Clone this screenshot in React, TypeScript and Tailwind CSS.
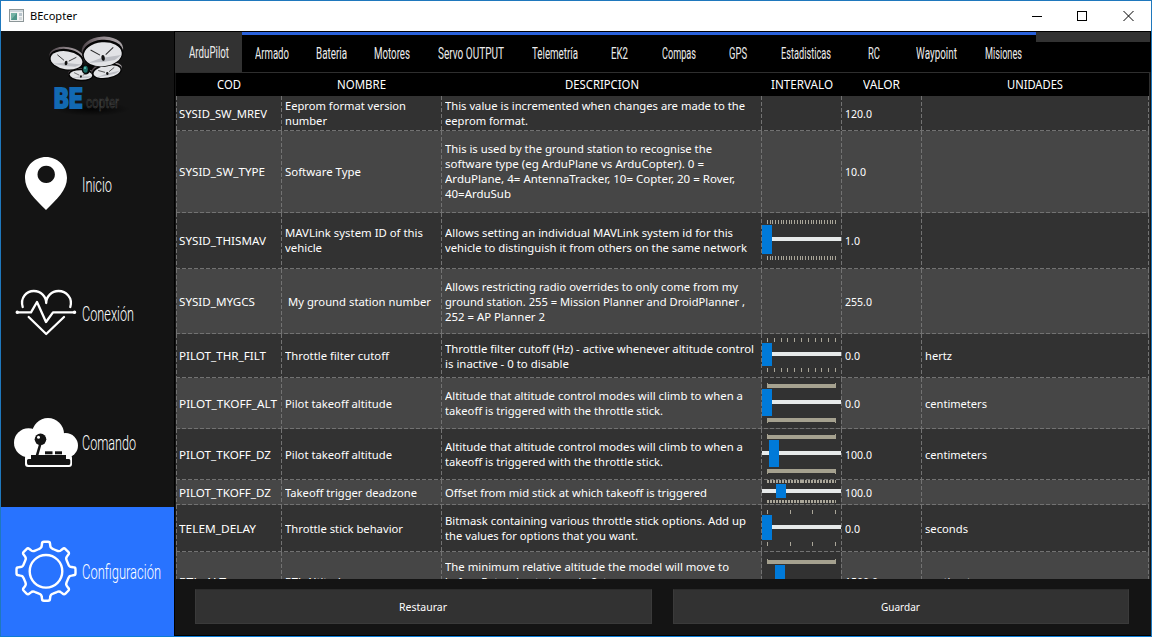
import React, { useLayoutEffect, useRef, useState } from "react";
import type { ReactNode } from "react";

/* Condenses or widens a single line of text to the given width. */
function Line({ t, w, className = "" }: { t: string; w: number; className?: string }) {
  const ref = useRef<HTMLSpanElement>(null);
  const [scale, setScale] = useState(1);
  useLayoutEffect(() => {
    const el = ref.current;
    if (!el) return;
    el.style.transform = "none";
    const natural = el.getBoundingClientRect().width;
    el.style.transform = `scaleX(${w / natural})`;
    setScale(w / natural);
  }, [t, w]);
  return (
    <span className={`block shrink-0 ${className}`} style={{ width: w }}>
      <span ref={ref} className="inline-block origin-left whitespace-pre" style={{ transform: `scaleX(${scale})` }}>
        {t}
      </span>
    </span>
  );
}

type Txt = [string, number];
type SliderSpec = {
  top: number;
  bottom: number;
  tickH: number;
  thumbY: number;
  thumbH: number;
  thumbX: number;
  grooveY: number;
  intervals: number;
  tickW?: number;
};
type Row = {
  h: string;
  cod: Txt;
  name: Txt[];
  desc: Txt[];
  value: Txt;
  unit?: Txt;
  slider?: SliderSpec;
  indent?: boolean;
};

const rows: Row[] = [
  {
    h: "h-[35px]",
    cod: ["SYSID_SW_MREV", 88],
    name: [["Eeprom format version", 121], ["number", 42]],
    desc: [["This value is incremented when changes are made to the", 300], ["eeprom format.", 83]],
    value: ["120.0", 27],
  },
  {
    h: "h-[82px]",
    cod: ["SYSID_SW_TYPE", 86],
    name: [["Software Type", 76]],
    desc: [
      ["This is used by the ground station to recognise the", 267],
      ["software type (eg ArduPlane vs ArduCopter). 0 =", 259],
      ["ArduPlane, 4= AntennaTracker, 10= Copter, 20 = Rover,", 290],
      ["40=ArduSub", 66],
    ],
    value: ["10.0", 21],
  },
  {
    h: "h-[56px]",
    cod: ["SYSID_THISMAV", 87],
    name: [["MAVLink system ID of this", 138], ["vehicle", 37]],
    desc: [
      ["Allows setting an individual MAVLink system id for this", 288],
      ["vehicle to distinguish it from others on the same network", 302],
    ],
    value: ["1.0", 15],
    slider: { top: 7, bottom: 43, tickH: 4, thumbY: 12, thumbH: 29, thumbX: 0, grooveY: 24, intervals: 25 },
  },
  {
    h: "h-[65px]",
    cod: ["SYSID_MYGCS", 76],
    indent: true,
    name: [["My ground station number", 143]],
    desc: [
      ["Allows restricting radio overrides to only come from my", 293],
      ["ground station. 255 = Mission Planner and DroidPlanner ,", 300],
      ["252 = AP Planner 2", 100],
    ],
    value: ["255.0", 27],
  },
  {
    h: "h-[44px]",
    cod: ["PILOT_THR_FILT", 87],
    name: [["Throttle filter cutoff", 104]],
    desc: [["Throttle filter cutoff (Hz) - active whenever altitude control", 309], ["is inactive - 0 to disable", 124]],
    value: ["0.0", 15],
    unit: ["hertz", 27],
    slider: { top: 4, bottom: 34, tickH: 4, thumbY: 9, thumbH: 23, thumbX: 0, grooveY: 18, intervals: 10 },
  },
  {
    h: "h-[51px]",
    cod: ["PILOT_TKOFF_ALT", 98],
    name: [["Pilot takeoff altitude", 107]],
    desc: [["Altitude that altitude control modes will climb to when a", 298], ["takeoff is triggered with the throttle stick.", 218]],
    value: ["0.0", 15],
    unit: ["centimeters", 62],
    slider: { top: 6, bottom: 40, tickH: 4, thumbY: 11, thumbH: 27, thumbX: 0, grooveY: 22, intervals: 0 },
  },
  {
    h: "h-[51px]",
    cod: ["PILOT_TKOFF_DZ", 92],
    name: [["Pilot takeoff altitude", 107]],
    desc: [["Altitude that altitude control modes will climb to when a", 298], ["takeoff is triggered with the throttle stick.", 218]],
    value: ["100.0", 27],
    unit: ["centimeters", 62],
    slider: { top: 6, bottom: 40, tickH: 4, thumbY: 11, thumbH: 27, thumbX: 7, grooveY: 22, intervals: 0 },
  },
  {
    h: "h-[25px]",
    cod: ["PILOT_TKOFF_DZ", 92],
    name: [["Takeoff trigger deadzone", 132]],
    desc: [["Offset from mid stick at which takeoff is triggered", 262]],
    value: ["100.0", 27],
    slider: { top: 0, bottom: 20, tickH: 3, thumbY: 4, thumbH: 14, thumbX: 14, grooveY: 9, intervals: 23, tickW: 2 },
  },
  {
    h: "h-[47px]",
    cod: ["TELEM_DELAY", 77],
    name: [["Throttle stick behavior", 118]],
    desc: [["Bitmask containing various throttle stick options. Add up", 301], ["the values for options that you want.", 193]],
    value: ["0.0", 15],
    unit: ["seconds", 43],
    slider: { top: 5, bottom: 37, tickH: 4, thumbY: 10, thumbH: 25, thumbX: 0, grooveY: 20, intervals: 3 },
  },
  {
    h: "h-[60px]",
    cod: ["RTL_ALT", 47],
    name: [["RTL Altitude", 62]],
    desc: [["The minimum relative altitude the model will move to", 284], ["before Returning to Launch. Set", 162], ["to zero to return at current altitude.", 190]],
    value: ["1500.0", 33],
    unit: ["centimeters", 62],
    slider: { top: 8, bottom: 50, tickH: 4, thumbY: 13, thumbH: 35, thumbX: 13, grooveY: 29, intervals: 0 },
  },
];

function Ticks({ s, y, edge }: { s: SliderSpec; y: number; edge: number }) {
  if (s.intervals === 0) {
    return (
      <g fill="#a5a18f">
        <rect x="5" y={y} width="69" height="4" />
        <rect x="5" y={y + edge} width="1" height="4" />
        <rect x="73" y={y + edge} width="1" height="4" />
      </g>
    );
  }
  const ticks = Array.from({ length: s.intervals + 1 }, (_, i) => 5 + Math.round((i * 68) / s.intervals));
  return (
    <g fill="#aaa699">
      {ticks.map((x, i) => (
        <rect key={i} x={x} y={y} width={i === s.intervals ? 1 : s.tickW ?? 1} height={s.tickH} />
      ))}
    </g>
  );
}

function RangeSlider({ s }: { s: SliderSpec }) {
  return (
    <svg className="block h-full w-[79px] bg-[#323232]" shapeRendering="crispEdges">
      <Ticks s={s} y={s.top} edge={-1} />
      <Ticks s={s} y={s.bottom} edge={1} />
      <rect x="0" y={s.grooveY} width="79" height="4" fill="#e7eaea" />
      <rect x={s.thumbX} y={s.thumbY} width="10" height={s.thumbH} fill="#007ad9" />
    </svg>
  );
}

const dashV =
  "bg-[repeating-linear-gradient(to_bottom,#727272_0px,#727272_4px,transparent_4px,transparent_6px)] bg-no-repeat bg-right bg-[length:1px_100%]";
const dashH =
  "bg-[repeating-linear-gradient(to_right,#727272_0px,#727272_4px,transparent_4px,transparent_6px)] bg-no-repeat bg-bottom bg-[length:100%_1px]";

function Cell({ children, className, raised }: { children?: ReactNode; className: string; raised?: boolean }) {
  return (
    <div className={`flex h-full shrink-0 flex-col justify-center pr-px leading-[15px] ${raised ? "pb-[2px]" : "pb-px"} ${dashV} ${className}`}>
      {children}
    </div>
  );
}

const tabs: { t: string; w: number; cls: string }[] = [
  { t: "Armado", w: 34, cls: "w-[60px]" },
  { t: "Bateria", w: 31, cls: "w-[59px]" },
  { t: "Motores", w: 36, cls: "w-[62px]" },
  { t: "Servo OUTPUT", w: 66, cls: "w-[96px]" },
  { t: "Telemetría", w: 46, cls: "w-[72px]" },
  { t: "EK2", w: 17, cls: "w-[57px]" },
  { t: "Compas", w: 34, cls: "w-[62px]" },
  { t: "GPS", w: 18, cls: "w-[56px]" },
  { t: "Estadisticas", w: 50, cls: "w-[80px]" },
  { t: "RC", w: 12, cls: "w-[56px]" },
  { t: "Waypoint", w: 41, cls: "w-[69px]" },
  { t: "Misiones", w: 37, cls: "w-[65px]" },
];

function Rotor({ x, y, rx, ry, rot, rim }: { x: number; y: number; rx: number; ry: number; rot: number; rim: number }) {
  return (
    <g transform={`translate(${x} ${y}) rotate(${rot})`}>
      <ellipse cx={0} cy={-rim} rx={rx + 1.8} ry={ry + 1.2} fill="url(#rim)" />
      <ellipse cx={0} cy={-rim * 0.2} rx={rx + 1.6} ry={ry + 1.6} fill="#050505" />
      <ellipse rx={rx} ry={ry} fill="#e2e3e6" />
      <path
        d={`M${-rx * 0.8} ${ry * 0.6} L${-rx * 0.1} ${ry * 0.3} L${rx * 0.97} ${ry * 0.2} L${rx * 0.6} ${ry * 0.55} L0 ${ry * 0.65}Z`}
        fill="#bcbec4"
      />
      <path
        d={`M${-rx * 0.62} ${-ry * 0.45} L${-rx * 0.15} ${ry * 0.05} M${rx * 0.15} ${ry * 0.05} L${rx * 0.58} ${-ry * 0.5}`}
        stroke="#2a2a2a"
        strokeWidth={rx / 19}
      />
      <ellipse cx={0} cy={ry * 0.3} rx={rx * 0.09} ry={ry * 0.25} fill="#111" />
    </g>
  );
}

function Logo() {
  return (
    <svg width="173" height="89" viewBox="1 31 173 89" className="block">
      <defs>
        <linearGradient id="rim" x1="0" y1="0" x2="1" y2="0">
          <stop offset="0" stopColor="#4b4247" />
          <stop offset="0.5" stopColor="#93898e" />
          <stop offset="1" stopColor="#aaa5a8" />
        </linearGradient>
        <radialGradient id="shade">
          <stop offset="0" stopColor="#000" stopOpacity="0.8" />
          <stop offset="1" stopColor="#000" stopOpacity="0" />
        </radialGradient>
      </defs>
      <ellipse cx="92" cy="109" rx="38" ry="7" fill="url(#shade)" />
      <path d="M78 66L96 64L104 72L88 78L76 72Z" fill="#050505" />
      <Rotor x={81} y={75} rx={11.3} ry={4.8} rot={2} rim={1} />
      <Rotor x={107} y={71.7} rx={13.6} ry={6} rot={-10} rim={2} />
      <Rotor x={66.5} y={60.3} rx={16} ry={9} rot={9} rim={3} />
      <Rotor x={102.8} y={54.3} rx={19} ry={12} rot={-5} rim={4.5} />
      <ellipse cx="86" cy="69.5" rx="4.2" ry="5" fill="#080808" />
      <ellipse cx="85.5" cy="69.3" rx="2.3" ry="3.5" fill="#1c6f69" />
      <circle cx="85" cy="68" r="1" fill="#62c7bb" />
      <text x="54" y="108" textLength="29" lengthAdjust="spacingAndGlyphs" fill="#1269b2" stroke="#1269b2" strokeWidth="2.200" className="font-['DejaVu_Sans_Mono',monospace] text-[26px] font-bold">BE</text>
      <text x="86" y="108" textLength="33" lengthAdjust="spacingAndGlyphs" fill="#1b1b1b" stroke="#444" strokeWidth="0.500" className="font-['Roboto',sans-serif] text-[17px]">copter</text>
    </svg>
  );
}

function PinIcon() {
  return (
    <svg width="64" height="129" viewBox="14 120 64 129">
      <path fill="#fff" fillRule="evenodd" d="M46 157C57.5 157 67 166.300 67 178C67 190 57 199 46 210C35 199 25 190 25 178C25 166.300 34.500 157 46 157ZM46.200 165.700a8.700 8.700 0 1 0 .01 0Z" />
    </svg>
  );
}

function HeartIcon() {
  return (
    <svg width="64" height="129" viewBox="14 249 64 129" fill="none" stroke="#fff" strokeWidth="2.300" strokeLinecap="round" strokeLinejoin="round">
      <path d="M22.700 307C20 297.500 26.500 291 33.800 291C41 291 46.200 296.500 46.200 303C46.200 296.500 51.500 291 58.500 291C66 291 73 297.500 70.300 307" />
      <path d="M17 312.300H31L37 302L46 322L53 312.300H75" />
      <path d="M28.700 317L46.200 334L64 317" />
      <circle cx="17.300" cy="312.300" r="0.600" />
      <circle cx="74.500" cy="312.300" r="0.600" />
    </svg>
  );
}

function JoystickIcon() {
  return (
    <svg width="64" height="129" viewBox="14 378 64 129">
      <g fill="#fff">
        <circle cx="48" cy="434" r="16" />
        <circle cx="28.500" cy="442.800" r="14.500" />
        <circle cx="65.500" cy="445.500" r="12.500" />
        <rect x="28" y="440" width="38" height="18" />
        <rect x="25" y="455" width="47" height="12" rx="3" />
      </g>
      <g fill="#141414">
        <path d="M31 455H66V459H69Q70.300 459 70.300 460.500V463Q70.300 465 69 465H28.500Q27 465 27 463V460.500Q27 459 28.500 459H31Z" />
        <rect x="45" y="451.300" width="7.500" height="3" />
        <rect x="55" y="451.300" width="7" height="3" />
        <circle cx="40.500" cy="439.300" r="5.800" />
        <path d="M35.800 455L39.200 443.500L41.700 443.500L38.500 455Z" />
      </g>
      <circle cx="38.500" cy="437.200" r="1.500" fill="#fff" />
    </svg>
  );
}

const gearPath = (() => {
  const pts: string[] = [];
  for (let i = 0; i < 8; i++) {
    const a = (i * Math.PI) / 4;
    const p = (r: number, off: number) =>
      `${(46 + r * Math.sin(a) + off * Math.cos(a)).toFixed(2)} ${(571.3 - r * Math.cos(a) + off * Math.sin(a)).toFixed(2)}`;
    pts.push(
      `${i === 0 ? "M" : "L"}${p(22.3, -7)} Q${p(23.3, -4.3)} ${p(25.5, -4.3)} L${p(27.5, -4)} Q${p(29.5, -4)} ${p(29.5, -2)} L${p(29.5, 2)} Q${p(29.5, 4)} ${p(27.5, 4)} L${p(25.5, 4.3)} Q${p(23.3, 4.3)} ${p(22.3, 7)}`
    );
  }
  return pts.join(" ") + "Z";
})();

function GearIcon() {
  return (
    <svg width="64" height="129" viewBox="14 507 64 129" fill="none" stroke="#fff" strokeWidth="2.400" strokeLinejoin="round">
      <path d={gearPath} />
      <circle cx="46" cy="571.300" r="16.300" />
    </svg>
  );
}

function NavItem({ icon, t, w, active }: { icon: ReactNode; t: string; w: number; active?: boolean }) {
  return (
    <div className={`flex h-[129px] items-center gap-1 pl-[13px] ${active ? "bg-[#2873ff]" : ""}`}>
      {icon}
      <Line t={t} w={w} className="font-['Roboto',sans-serif] text-[20px] leading-6 font-light" />
    </div>
  );
}

const headers: { t: string; w: number; cls: string }[] = [
  { t: "COD", w: 24, cls: "w-[105px]" },
  { t: "NOMBRE", w: 49, cls: "w-[160px]" },
  { t: "DESCRIPCION", w: 74, cls: "w-[322px]" },
  { t: "INTERVALO", w: 62, cls: "w-[78px]" },
  { t: "VALOR", w: 37, cls: "w-[80px]" },
  { t: "UNIDADES", w: 56, cls: "w-[227px]" },
];

export default function App() {
  return (
    <div className="flex h-[637px] w-[1152px] flex-col overflow-hidden border border-[#1f78bd] border-b-[#0c7cd5] bg-[#141414] font-['Noto_Sans','Open_Sans',sans-serif] text-[11.5px] text-white">
      <header className="flex h-[30px] shrink-0 items-center bg-white text-black">
        <svg width="16" height="14" viewBox="0 0 16 14" className="ml-2">
          <rect x="0.500" y="0.500" width="14" height="12" fill="#f1f3f3" stroke="#8c9698" />
          <rect x="1" y="1" width="13" height="2" fill="#cbd5da" />
          <rect x="2" y="4" width="6" height="7" fill="#4b9488" />
          <path d="M2 4h6l-6 7z" fill="#73b2a5" />
          <rect x="10" y="4" width="3" height="3" fill="#b8c4cc" />
          <rect x="10" y="8" width="3" height="3" fill="#d2d9dc" />
        </svg>
        <Line t="BEcopter" w={47} className="ml-[5px]" />
        <svg width="110" height="12" viewBox="0 0 110 12" className="mr-[17px] ml-auto" fill="none" stroke="#000" strokeWidth="1">
          <path d="M8 6.500h10" />
          <rect x="53.500" y="1.500" width="9" height="9" />
          <path d="M99.500 1l10 10M109.500 1l-10 10" />
        </svg>
      </header>
      <div className="flex min-h-0 flex-1">
        <aside className="w-[173px] shrink-0">
          <Logo />
          <NavItem icon={<PinIcon />} t="Inicio" w={30} />
          <NavItem icon={<HeartIcon />} t="Conexión" w={52} />
          <NavItem icon={<JoystickIcon />} t="Comando" w={54} />
          <NavItem icon={<GearIcon />} t="Configuración" w={79} active />
        </aside>
        <main className="flex min-w-0 flex-1 flex-col border-t border-l border-black">
          <nav className="flex h-10 shrink-0 bg-black font-['Roboto',sans-serif] text-[16px] leading-5 text-[#ececec]">
            <div className="flex w-[67px] justify-center bg-[#323232] pt-[11px]">
              <Line t="ArduPilot" w={40} />
            </div>
            <div className="flex border-t-[3px] border-[#2a62dc]">
              {tabs.map((tab) => (
                <div key={tab.t} className={`flex justify-center pt-[9px] ${tab.cls}`}>
                  <Line t={tab.t} w={tab.w} />
                </div>
              ))}
            </div>
            <div className="mr-px h-[10px] flex-1 bg-[#323232]" />
          </nav>
          <section className="mr-px flex h-[507px] shrink-0 flex-col overflow-hidden border-t border-r border-[#2e2e2e] pl-px">
            <div className="flex h-[23px] shrink-0 items-center bg-black text-[12px]">
              {headers.map((h) => (
                <div key={h.t} className={`flex shrink-0 justify-center ${h.cls}`}>
                  <Line t={h.t} w={h.w} />
                </div>
              ))}
            </div>
            <div>
              {rows.map((r, i) => (
                <div key={i} className={`w-[973px] ${i % 2 ? "bg-[#464646]" : "bg-[#323232]"}`}>
                  <div className={`flex ${r.h} ${dashH}`}>
                    <Cell className="w-px">{null}</Cell>
                    <Cell className="w-[105px] pl-[2px]">
                      <Line t={r.cod[0]} w={r.cod[1]} />
                    </Cell>
                    <Cell raised={i === 2} className={r.indent ? "w-[160px] pl-[6px]" : "w-[160px] pl-[3px]"}>
                      {r.name.map((l) => (
                        <Line key={l[0]} t={l[0]} w={l[1]} />
                      ))}
                    </Cell>
                    <Cell raised={i === 1 || i === 2} className="w-[320px] pl-[3px]">
                      {r.desc.map((l) => (
                        <Line key={l[0]} t={l[0]} w={l[1]} />
                      ))}
                    </Cell>
                    <Cell className="w-[80px]">{r.slider && <RangeSlider s={r.slider} />}</Cell>
                    <Cell className="w-[80px] pl-[3px]">
                      <Line t={r.value[0]} w={r.value[1]} />
                    </Cell>
                    <Cell className="w-[227px] pl-[3px]">{r.unit && <Line t={r.unit[0]} w={r.unit[1]} />}</Cell>
                  </div>
                </div>
              ))}
            </div>
          </section>
          <footer className="flex min-h-0 flex-1 gap-[21px] border-b border-black pt-[10px] pr-[22px] pb-[11px] pl-[20px]">
            <button className="flex flex-1 items-center justify-center border border-[#3a3a3a] border-t-[#2b2b2b] bg-[#323232]">
              <Line t="Restaurar" w={48} />
            </button>
            <button className="flex flex-1 items-center justify-center border border-[#3a3a3a] border-t-[#2b2b2b] bg-[#323232]">
              <Line t="Guardar" w={39} />
            </button>
          </footer>
        </main>
      </div>
    </div>
  );
}
